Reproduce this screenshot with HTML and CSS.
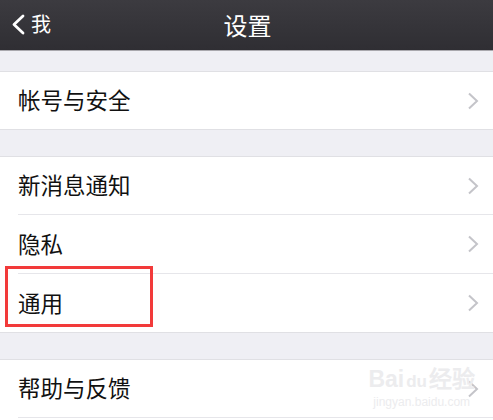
FILE: index.html
```html
<!DOCTYPE html>
<html lang="zh-CN">
<head>
<meta charset="UTF-8">
<meta name="viewport" content="width=device-width, initial-scale=1.0">
<title>设置</title>
<link rel="stylesheet" href="styles.css">
</head>
<body>

<div class="navbar">
  <div class="back">
    <svg class="back-icon" width="15" height="21" viewBox="0 0 15 21">
      <path d="M12 2 L3 10.5 L12 19" fill="none" stroke="#fff" stroke-width="2.8" stroke-linecap="round" stroke-linejoin="round"/>
    </svg>
    <span>我</span>
  </div>
  <div class="title">设置</div>
</div>

<div class="group first">
  <div class="row">
    <span>帐号与安全</span>
    <svg class="chevron" width="12" height="18" viewBox="0 0 12 18"><path d="M2 1.5 L10 9 L2 16.5" fill="none" stroke="#c4c4c9" stroke-width="2"/></svg>
  </div>
</div>

<div class="group">
  <div class="row">
    <span>新消息通知</span>
    <svg class="chevron" width="12" height="18" viewBox="0 0 12 18"><path d="M2 1.5 L10 9 L2 16.5" fill="none" stroke="#c4c4c9" stroke-width="2"/></svg>
  </div>
  <div class="row">
    <span>隐私</span>
    <svg class="chevron" width="12" height="18" viewBox="0 0 12 18"><path d="M2 1.5 L10 9 L2 16.5" fill="none" stroke="#c4c4c9" stroke-width="2"/></svg>
  </div>
  <div class="row">
    <span>通用</span>
    <svg class="chevron" width="12" height="18" viewBox="0 0 12 18"><path d="M2 1.5 L10 9 L2 16.5" fill="none" stroke="#c4c4c9" stroke-width="2"/></svg>
    <div class="highlight"></div>
  </div>
</div>

<div class="group">
  <div class="row">
    <span>帮助与反馈</span>
    <svg class="chevron" width="12" height="18" viewBox="0 0 12 18"><path d="M2 1.5 L10 9 L2 16.5" fill="none" stroke="#c4c4c9" stroke-width="2"/></svg>
    <div class="watermark">
      <div class="wm-big">Bai<span class="wm-du">du</span>经验</div>
      <div class="wm-small">jingyan.baidu.com</div>
    </div>
  </div>
  <div class="row"></div>
</div>

</body>
</html>
```

FILE: styles.css
```css
body {
  margin: 0;
  background-color: #efeff4;
  font-family: "Noto Sans CJK SC", "Noto Sans", sans-serif;
  color: #111;
  height: 420px;
  overflow: hidden;
}
.navbar {
  position: relative;
  height: 50px;
  background: linear-gradient(#3c3b40, #2f2e33);
  border-bottom: 1px solid #a9a8ad;
  display: flex;
  align-items: center;
  justify-content: center;
  color: #fff;
}
.back {
  position: absolute;
  left: 11px;
  top: 13px;
  display: flex;
  align-items: center;
  gap: 5px;
  font-size: 20px;
  line-height: 22px;
}
.title {
  font-size: 24px;
  margin-left: 2px;
  margin-top: -2px;
}
.group {
  margin-top: 26px;
  background-color: #fff;
  border-top: 1px solid #e0e0e4;
  border-bottom: 1px solid #e0e0e4;
}
.group.first {
  margin-top: 20px;
}
.row {
  position: relative;
  height: 57px;
  padding: 0 14px 0 18px;
  display: flex;
  align-items: center;
  justify-content: space-between;
  font-size: 22.5px;
}
.row span {
  margin-top: -3px;
}
.row + .row {
  height: 58px;
  border-top: 1px solid transparent;
}
.row + .row::before {
  content: "";
  position: absolute;
  left: 18px;
  right: 0;
  top: -1px;
  height: 1px;
  background-color: #e6e6ea;
}
.chevron {
  display: block;
}
.highlight {
  position: absolute;
  left: 5px;
  top: -8px;
  width: 148px;
  height: 61px;
  box-sizing: border-box;
  border: 3px solid #f23a3a;
}
.watermark {
  position: absolute;
  right: 18px;
  top: 5px;
  color: #ececee;
  text-align: center;
  font-family: "Liberation Sans", sans-serif;
}
.wm-big {
  font-size: 23px;
  font-weight: bold;
  line-height: 28px;
}
.wm-big span {
  margin-top: 0;
}
.wm-du {
  font-size: 17px;
  margin: 0 2px;
}
.wm-small {
  font-size: 12px;
  line-height: 13px;
}
```
